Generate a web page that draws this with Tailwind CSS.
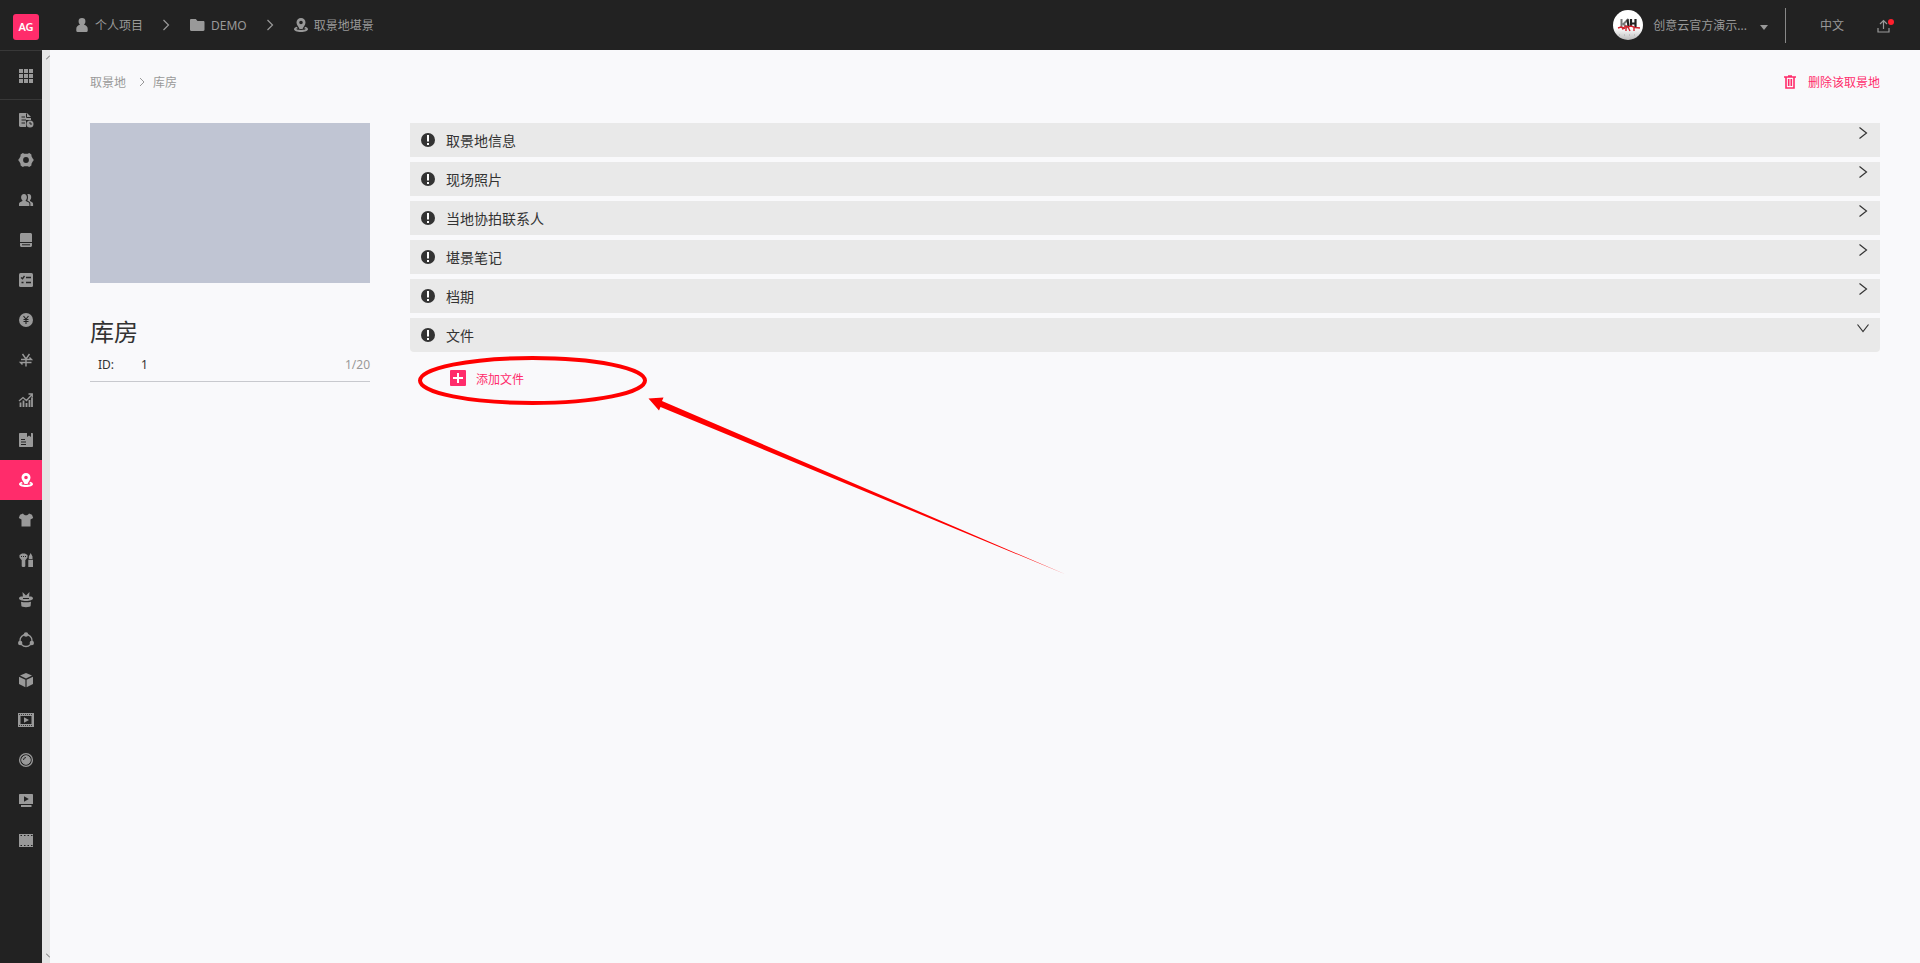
<!DOCTYPE html>
<html lang="zh-CN">
<head>
    <meta charset="UTF-8">
    <meta name="viewport" content="width=device-width, initial-scale=1.0">
    <title>取景地堪景</title>
    <script src="https://cdn.jsdelivr.net/npm/@tailwindcss/browser@4"></script>
</head>

<body class="min-h-screen flex flex-col bg-[#f9f9fb] text-[#333] text-xs font-['Noto_Sans','Noto_Sans_CJK_SC',sans-serif]">

    <!-- Header -->
    <header class="h-[50px] flex items-center bg-[#222] text-[#999]">
        <a href="#home" class="ml-[13px] mt-1 w-[26px] h-[26px] flex items-center justify-center rounded-[3px] bg-[#ff2c6b] text-white text-[11px] font-semibold">AG</a>

        <nav class="ml-[37px] flex items-center">
            <a href="#projects" class="flex items-center gap-[6px]">
                <svg class="w-[13px] h-[14px]" viewBox="0 0 13 14" fill="currentColor"><path d="M6 0a3.400 3.400 0 0 1 3.400 3.600c0 1.400-.6 2.500-1.400 3.200 2.200.5 3.700 2 3.700 3.900v2.100c0 .7-.4 1.200-1.100 1.200H1.400c-.7 0-1.100-.5-1.100-1.200v-2.100c0-1.900 1.500-3.400 3.700-3.900-.8-.7-1.400-1.800-1.400-3.200A3.400 3.400 0 0 1 6 0z"/></svg>
                <span class="pt-[2px]">个人项目</span>
            </a>
            <svg class="ml-[19px] mr-5 w-2 h-3" viewBox="0 0 8 12" fill="none" stroke="currentColor" stroke-width="1.200"><path d="M1.500 1l5 5-5 5"/></svg>
            <a href="#demo" class="flex items-center gap-[6px]">
                <svg class="w-[15px] h-[14px]" viewBox="0 0 15 14" fill="currentColor"><path d="M1.200 1h4.600l1.700 2h5.800c.7 0 1.200.5 1.200 1.200v7.600c0 .7-.5 1.200-1.200 1.200H1.200C.5 13 0 12.500 0 11.800V2.200C0 1.500.5 1 1.200 1z"/></svg>
                <span class="pt-[2px]">DEMO</span>
            </a>
            <svg class="ml-[19px] mr-5 w-2 h-3" viewBox="0 0 8 12" fill="none" stroke="currentColor" stroke-width="1.200"><path d="M1.500 1l5 5-5 5"/></svg>
            <a href="#scout" class="flex items-center gap-[6px]">
                <svg class="w-[14px] h-[14px]" viewBox="0 0 14 14" fill="currentColor"><path fill-rule="evenodd" d="M7 0a4.500 4.500 0 0 1 4.500 4.500C11.500 7 9.500 8.500 8.500 11h-3C4.500 8.500 2.500 7 2.500 4.500A4.500 4.500 0 0 1 7 0zm0 2.700a1.800 1.800 0 1 0 0 3.600 1.800 1.800 0 0 0 0-3.600z"/><path d="M2.800 8.800C1 9.400 0 10.300 0 11.300 0 12.900 3 14 7 14s7-1.100 7-2.700c0-1-1-1.900-2.800-2.500l-1 1.500c.9.200 1.500.5 1.500.8 0 .5-2.100.9-4.700.9s-4.700-.4-4.700-.9c0-.3.600-.6 1.500-.8z"/></svg>
                <span class="pt-[2px]">取景地堪景</span>
            </a>
        </nav>

        <div class="ml-auto flex items-center">
            <button type="button" class="flex items-center">
                <svg class="w-[30px] h-[30px]" viewBox="0 0 30 30">
                    <defs>
                        <linearGradient id="avatarBg" x1="0" y1="0" x2="0" y2="1"><stop offset=".6" stop-color="#fff"/><stop offset="1" stop-color="#bbb"/></linearGradient>
                    </defs>
                    <circle cx="15" cy="15" r="15" fill="url(#avatarBg)"/>
                    <path d="M8.500 9v9M15.500 9l-5 5 4 4" fill="none" stroke="#777" stroke-width="2"/>
                    <path d="M14.500 9.500l1 7M18 9v8M22.500 9v9M18 13.500h4" fill="none" stroke="#222" stroke-width="2.200"/>
                    <path d="M5 18l3-1 2 1 3-2 2 1 3-1 4 1.500 5 .5M9 19l3-1M13 17v4M15 17l2 4M21 17v4" fill="none" stroke="#d2232e" stroke-width="1.400"/>
                    <path d="M6 25h1M11 25h1M16 25h1M21 25h1" stroke="#aaa" stroke-width="1"/>
                </svg>
                <span class="ml-[10px] pt-[2px]">创意云官方演示...</span>
                <svg class="ml-[13px] mt-1 w-2 h-[5px]" viewBox="0 0 8 5" fill="currentColor"><path d="M0 0h8L4 5z"/></svg>
            </button>
            <span class="ml-[17px] w-px h-[35px] bg-[#888]"></span>
            <button type="button" class="ml-[34px] pt-[2px]">中文</button>
            <button type="button" aria-label="上传" class="ml-[33px] mr-[26px] pt-[2px]">
                <svg class="w-[17px] h-[14px]" viewBox="0 0 17 14" fill="none" stroke="currentColor" stroke-width="1.200"><path d="M1 9v4h11V9M6.500 10V1.500M3 5l3.500-3.500L10 5"/><circle cx="14" cy="3" r="3" fill="#ff1f2d" stroke="none"/></svg>
            </button>
        </div>
    </header>

    <div class="flex-1 flex">

        <!-- Sidebar -->
        <aside class="w-[42px] shrink-0 bg-[#222] text-[#999]">
            <a href="#apps" aria-label="应用" class="h-[50px] pt-[2px] pl-[10px] flex items-center justify-center border-y border-[#383838]">
                <svg class="w-[14px] h-[14px]" viewBox="0 0 14 14" fill="currentColor"><path d="M0 0h4v4H0zM5 0h4v4H5zM10 0h4v4h-4zM0 5h4v4H0zM5 5h4v4H5zM10 5h4v4h-4zM0 10h4v4H0zM5 10h4v4H5zM10 10h4v4h-4z"/></svg>
            </a>
            <nav>
                <a href="#script" aria-label="剧本" class="h-10 pl-[10px] flex items-center justify-center">
                    <svg class="w-4 h-4" viewBox="0 0 16 16"><path d="M2 1h7l4 4v3H8v7H2.500C1.700 15 1 14.500 1 13.800V2c0-.6.4-1 1-1z" fill="currentColor"/><path d="M3.500 5H7M3.500 8H8M3.500 11H7M8.500 1.500v4H13" fill="none" stroke="#222"/><circle cx="12" cy="12" r="3.500" fill="currentColor"/><path d="M12 10v2h2" fill="none" stroke="#222"/></svg>
                </a>
                <a href="#settings" aria-label="设置" class="h-10 pl-[10px] flex items-center justify-center">
                    <svg class="w-4 h-4" viewBox="0 0 16 16" fill="currentColor"><path fill-rule="evenodd" d="M4.800 1l1.500.7h3.400L11.200 1l2.200 1.500.1 1.800 1.200 2.200.8.700v1.600l-.8.700-1.200 2.200-.1 1.800-2.200 1.500-1.500-.7H6.300L4.800 15l-2.200-1.500-.1-1.800-1.200-2.200-.8-.7V7.200l.8-.7 1.200-2.200.1-1.800zM8 5.100a2.900 2.900 0 1 0 0 5.800 2.900 2.900 0 0 0 0-5.800z"/></svg>
                </a>
                <a href="#people" aria-label="人员" class="h-10 pl-[10px] flex items-center justify-center">
                    <svg class="w-4 h-4" viewBox="0 0 16 16" fill="currentColor"><path d="M6 2c1.800 0 2.900 1.400 2.900 3.200 0 1.400-.5 2.500-1.200 3.100v.7l2.700 1.300c.7.4 1 .9 1 1.600V14H1v-2.100c0-.7.300-1.200 1-1.600L4.400 9v-.7C3.600 7.700 3.100 6.600 3.100 5.200 3.100 3.400 4.200 2 6 2z"/><path d="M9.300 2.300c.4-.2.800-.3 1.200-.3 1.700 0 2.700 1.300 2.700 3 0 1.500-.5 2.500-1.200 3.200V9l2.200 1.200c.6.4.9.9.9 1.500V14h-2.700v-2.300c0-1-.5-1.800-1.400-2.300L9.300 8.500c.5-.9.700-2 .7-3.300 0-1.100-.2-2.100-.7-2.900z"/></svg>
                </a>
                <a href="#book" aria-label="手册" class="h-10 pl-[10px] flex items-center justify-center">
                    <svg class="w-4 h-4" viewBox="0 0 16 16" fill="currentColor"><path d="M3.500 1h9c.8 0 1.500.7 1.500 1.500V10H2V2.500C2 1.700 2.700 1 3.500 1zM2 11h12v2.500c0 .8-.7 1.500-1.500 1.500h-9c-.8 0-1.500-.7-1.500-1.500z"/><path d="M4 12.800h8" stroke="#222"/></svg>
                </a>
                <a href="#tasks" aria-label="任务" class="h-10 pl-[10px] flex items-center justify-center">
                    <svg class="w-4 h-4" viewBox="0 0 16 16"><rect x="1" y="1" width="14" height="14" rx="1.500" fill="currentColor"/><path d="M3 5.500l1.500 1.200L6.500 4M8 5.500h5M8 10.500h5M3.500 10.500h2" fill="none" stroke="#222" stroke-width="1.300"/></svg>
                </a>
                <a href="#budget" aria-label="预算" class="h-10 pl-[10px] flex items-center justify-center">
                    <svg class="w-4 h-4" viewBox="0 0 16 16"><circle cx="8" cy="8" r="7" fill="currentColor"/><path d="M5.500 4L8 7.200 10.500 4M5.500 7.500h5M5.500 9.500h5M8 7v5" fill="none" stroke="#222" stroke-width="1.100"/></svg>
                </a>
                <a href="#cost" aria-label="费用" class="h-10 pl-[10px] flex items-center justify-center">
                    <svg class="w-4 h-4" viewBox="0 0 16 16" fill="none" stroke="currentColor" stroke-width="1.400"><path d="M4.500 2L8 7l3.500-5M3 7.500h10.500L11.500 5.500M13.500 10.500H2.500l2 2M8 7v7.500"/></svg>
                </a>
                <a href="#stats" aria-label="统计" class="h-10 pl-[10px] flex items-center justify-center">
                    <svg class="w-4 h-4" viewBox="0 0 16 16" fill="none" stroke="currentColor"><path d="M2.500 15v-4.500M5.500 15V8.500M8.500 15v-4M11.500 15V8M14 15V5.500" stroke-width="1.800"/><path d="M1 9l4-3.500 3.500 3L14 2.500M10.500 2h3.800v3.500" stroke-width="1.300"/></svg>
                </a>
                <a href="#report" aria-label="报告" class="h-10 pl-[10px] flex items-center justify-center">
                    <svg class="w-4 h-4" viewBox="0 0 16 16"><path d="M2 1h7v4l2-1.500L13 5V1h1c.6 0 1 .4 1 1v12c0 .6-.4 1-1 1H2c-.6 0-1-.4-1-1V2c0-.6.4-1 1-1z" fill="currentColor"/><path d="M3 7.500h4M3 10h5M3 12.500h5" stroke="#222" stroke-width="1.100"/></svg>
                </a>
                <a href="#scout" aria-label="取景地堪景" class="h-10 pl-[10px] flex items-center justify-center bg-[#ff2c6b] text-white">
                    <svg class="w-[14px] h-[14px]" viewBox="0 0 14 14" fill="currentColor"><path fill-rule="evenodd" d="M7 0a4.500 4.500 0 0 1 4.500 4.500C11.500 7 9.500 8.500 8.500 11h-3C4.500 8.500 2.500 7 2.500 4.500A4.500 4.500 0 0 1 7 0zm0 2.700a1.800 1.800 0 1 0 0 3.600 1.800 1.800 0 0 0 0-3.600z"/><path d="M2.800 8.800C1 9.400 0 10.300 0 11.300 0 12.900 3 14 7 14s7-1.100 7-2.700c0-1-1-1.900-2.800-2.500l-1 1.500c.9.200 1.500.5 1.500.8 0 .5-2.100.9-4.700.9s-4.700-.4-4.700-.9c0-.3.600-.6 1.500-.8z"/></svg>
                </a>
                <a href="#costume" aria-label="服装" class="h-10 pl-[10px] flex items-center justify-center">
                    <svg class="w-4 h-4" viewBox="0 0 16 16" fill="currentColor"><path d="M5 1.500c.6 1.200 1.700 1.800 3 1.800s2.400-.6 3-1.800l3 1.200 1.200 3.300-2.700 1.500V14.500h-9V7.500L.8 6 2 2.700z"/></svg>
                </a>
                <a href="#makeup" aria-label="化妆" class="h-10 pl-[10px] flex items-center justify-center">
                    <svg class="w-4 h-4" viewBox="0 0 16 16" fill="currentColor"><path d="M1.500 3L4 1.500h3L9.500 3v2.500L7.500 8h-4l-2-2.500zM3.700 8h3.600v6c0 .6-.8 1-1.800 1s-1.800-.4-1.800-1zM10.800 7V4.500L12.700 1l1.800 3.500V7zM10.300 7.700H15V15h-4.700z"/><path d="M3 4.500h1M5 4.500h1M7 4.500h1" stroke="#222"/></svg>
                </a>
                <a href="#props" aria-label="道具" class="h-10 pl-[10px] flex items-center justify-center">
                    <svg class="w-4 h-4" viewBox="0 0 16 16" fill="currentColor"><path d="M4.500 0L8 3.500 11.500 0 11 6H5zM3 4.500h2V7h6V4.500h2c1.200.3 2 1 2 1.800C15 8 12 9 8 9S1 8 1 6.300c0-.8.8-1.500 2-1.800zM3 9.700c3.200.7 6.800.7 10 0L12.600 14c0 .7-2.100 1.200-4.600 1.200S3.400 14.700 3.400 14z"/></svg>
                </a>
                <a href="#flow" aria-label="流程" class="h-10 pl-[10px] flex items-center justify-center">
                    <svg class="w-4 h-4" viewBox="0 0 16 16" fill="currentColor"><circle cx="8" cy="8.500" r="6" fill="none" stroke="currentColor" stroke-width="1.300"/><circle cx="8" cy="2.500" r="2.200"/><circle cx="2.200" cy="11" r="2.200"/><circle cx="13.800" cy="11" r="2.200"/></svg>
                </a>
                <a href="#assets" aria-label="资产" class="h-10 pl-[10px] flex items-center justify-center">
                    <svg class="w-4 h-4" viewBox="0 0 16 16" fill="currentColor"><path d="M8 1l6 2.600L8 6.500 2 3.600zM1 4.700l6.400 3v7.500L1 12zM15 4.700l-6.400 3v7.500L15 12z"/></svg>
                </a>
                <a href="#video" aria-label="视频" class="h-10 pl-[10px] flex items-center justify-center">
                    <svg class="w-4 h-4" viewBox="0 0 16 16"><path d="M0 1h16v14H0z" fill="currentColor"/><path d="M2.500 4h11v8h-11z" fill="#222"/><path d="M1 2.500h14M1 13.500h14" stroke="#222" stroke-width=".8" stroke-dasharray="1 1"/><path d="M6 5.200v5.600L11 8z" fill="currentColor"/></svg>
                </a>
                <a href="#lens" aria-label="镜头" class="h-10 pl-[10px] flex items-center justify-center">
                    <svg class="w-4 h-4" viewBox="0 0 16 16" fill="none" stroke="currentColor"><circle cx="8" cy="8" r="6.400" stroke-width="1.300"/><circle cx="8" cy="8" r="4.300" fill="currentColor"/><path d="M5.500 8A2.500 2.500 0 0 1 8 5.500" stroke="#222"/></svg>
                </a>
                <a href="#play" aria-label="播放" class="h-10 pl-[10px] flex items-center justify-center">
                    <svg class="w-4 h-4" viewBox="0 0 16 16"><path d="M2 2h12c.6 0 1 .4 1 1v9H1V3c0-.6.4-1 1-1zM3 13h10.500v2H3z" fill="currentColor"/><path d="M6 4.300v5.400L10.800 7z" fill="#222"/></svg>
                </a>
                <a href="#film" aria-label="胶片" class="h-10 pl-[10px] flex items-center justify-center">
                    <svg class="w-4 h-4" viewBox="0 0 16 16"><path d="M1 2h14v13H1z" fill="currentColor"/><path d="M2.500 3.500h12M2.500 13.500h12" stroke="#222" stroke-width="1" stroke-dasharray="1.500 2"/></svg>
                </a>
            </nav>
        </aside>

        <!-- Scroll track -->
        <div class="w-2 shrink-0 flex flex-col justify-between items-end py-[5px] bg-[#e5e5e5]">
            <svg class="w-1 h-[5px]" viewBox="0 0 4 5" stroke="#666"><path d="M0 4.500L4 .5"/></svg>
            <svg class="w-1 h-[5px]" viewBox="0 0 4 5" stroke="#666"><path d="M0 .5l4 4"/></svg>
        </div>

        <!-- Main -->
        <main class="flex-1 min-w-0 px-10">
            <div class="mt-[22px] h-5 flex items-center justify-between">
                <nav class="flex items-center text-[#999]">
                    <a href="#locations" class="pt-[2px]">取景地</a>
                    <svg class="ml-[13px] mr-[8px] w-[6px] h-[10px]" viewBox="0 0 6 10" fill="none" stroke="currentColor"><path d="M1 1l4 4-4 4"/></svg>
                    <a href="#storage" class="pt-[2px]">库房</a>
                </nav>
                <button type="button" class="flex items-center gap-3 text-[#ff2c6b]">
                    <svg class="w-3 h-[14px]" viewBox="0 0 12 14" fill="none" stroke="currentColor" stroke-width="1.600"><path d="M0 2h12M4 1h4M2 2v11h8V2M4.700 4v7M7.300 4v7"/></svg>
                    <span class="pt-[2px]">删除该取景地</span>
                </button>
            </div>

            <div class="mt-[31px] flex gap-10">
                <!-- Location card -->
                <section class="w-[280px] shrink-0">
                    <div class="h-40 bg-[#c0c5d3]"></div>
                    <input type="text" value="库房" maxlength="20" aria-label="取景地名称" class="mt-[27px] block w-full h-10 bg-transparent text-2xl outline-none">
                    <div class="mt-[5px] h-[27px] pb-[6px] flex items-center border-b border-[#c8c9ce]">
                        <span class="ml-2 w-[43px]">ID:</span>
                        <span>1</span>
                        <span class="ml-auto text-[#999]">1/20</span>
                    </div>
                </section>

                <!-- Accordion -->
                <section class="flex-1 min-w-0 flex flex-col gap-[5px] text-sm">
                    <button type="button" class="h-[34px] px-[11px] flex items-center bg-[#e9e9e9]">
                        <svg class="w-[14px] h-[14px]" viewBox="0 0 14 14"><circle cx="7" cy="7" r="7" fill="#333"/><path d="M7 2v6.500M7 10v2" stroke="#fff" stroke-width="2"/></svg>
                        <span class="ml-[11px] pt-[2px]">取景地信息</span>
                        <svg class="ml-auto self-start mt-1 w-3 h-3" viewBox="0 0 12 12" fill="none" stroke="#333" stroke-width="1.200"><path d="M2.500 .5l7 5.500-7 5.500"/></svg>
                    </button>
                    <button type="button" class="h-[34px] px-[11px] flex items-center bg-[#e9e9e9]">
                        <svg class="w-[14px] h-[14px]" viewBox="0 0 14 14"><circle cx="7" cy="7" r="7" fill="#333"/><path d="M7 2v6.500M7 10v2" stroke="#fff" stroke-width="2"/></svg>
                        <span class="ml-[11px] pt-[2px]">现场照片</span>
                        <svg class="ml-auto self-start mt-1 w-3 h-3" viewBox="0 0 12 12" fill="none" stroke="#333" stroke-width="1.200"><path d="M2.500 .5l7 5.500-7 5.500"/></svg>
                    </button>
                    <button type="button" class="h-[34px] px-[11px] flex items-center bg-[#e9e9e9]">
                        <svg class="w-[14px] h-[14px]" viewBox="0 0 14 14"><circle cx="7" cy="7" r="7" fill="#333"/><path d="M7 2v6.500M7 10v2" stroke="#fff" stroke-width="2"/></svg>
                        <span class="ml-[11px] pt-[2px]">当地协拍联系人</span>
                        <svg class="ml-auto self-start mt-1 w-3 h-3" viewBox="0 0 12 12" fill="none" stroke="#333" stroke-width="1.200"><path d="M2.500 .5l7 5.500-7 5.500"/></svg>
                    </button>
                    <button type="button" class="h-[34px] px-[11px] flex items-center bg-[#e9e9e9]">
                        <svg class="w-[14px] h-[14px]" viewBox="0 0 14 14"><circle cx="7" cy="7" r="7" fill="#333"/><path d="M7 2v6.500M7 10v2" stroke="#fff" stroke-width="2"/></svg>
                        <span class="ml-[11px] pt-[2px]">堪景笔记</span>
                        <svg class="ml-auto self-start mt-1 w-3 h-3" viewBox="0 0 12 12" fill="none" stroke="#333" stroke-width="1.200"><path d="M2.500 .5l7 5.500-7 5.500"/></svg>
                    </button>
                    <button type="button" class="h-[34px] px-[11px] flex items-center bg-[#e9e9e9]">
                        <svg class="w-[14px] h-[14px]" viewBox="0 0 14 14"><circle cx="7" cy="7" r="7" fill="#333"/><path d="M7 2v6.500M7 10v2" stroke="#fff" stroke-width="2"/></svg>
                        <span class="ml-[11px] pt-[2px]">档期</span>
                        <svg class="ml-auto self-start mt-1 w-3 h-3" viewBox="0 0 12 12" fill="none" stroke="#333" stroke-width="1.200"><path d="M2.500 .5l7 5.500-7 5.500"/></svg>
                    </button>
                    <div>
                        <button type="button" aria-expanded="true" class="w-full h-[34px] px-[11px] flex items-center rounded-b bg-[#e9e9e9]">
                            <svg class="w-[14px] h-[14px]" viewBox="0 0 14 14"><circle cx="7" cy="7" r="7" fill="#333"/><path d="M7 2v6.500M7 10v2" stroke="#fff" stroke-width="2"/></svg>
                            <span class="ml-[11px] pt-[2px]">文件</span>
                            <svg class="ml-auto self-start mt-1 w-3 h-3" viewBox="0 0 12 12" fill="none" stroke="#333" stroke-width="1.200"><path d="M.5 2.500l5.500 7 5.500-7"/></svg>
                        </button>
                        <div class="relative pt-[18px] pl-10">
                            <button type="button" class="flex items-start gap-[10px] text-xs text-[#ff2c6b]">
                                <svg class="w-4 h-4" viewBox="0 0 16 16"><rect width="16" height="16" rx="1" fill="currentColor"/><path d="M8 3v10M3 8h10" stroke="#fff" stroke-width="2"/></svg>
                                <span class="leading-5">添加文件</span>
                            </button>
                            <!-- Pointer to the add button -->
                            <svg class="absolute left-0 top-0 w-[660px] h-[230px] pointer-events-none" viewBox="0 0 660 230" fill="red">
                                <ellipse cx="122.500" cy="28.500" rx="112.500" ry="22.500" fill="none" stroke="red" stroke-width="4"/>
                                <path d="M238.500 46.500l15-1-1.500 3.500L656 222.500 250.500 55l-1.500 3.500z"/>
                            </svg>
                        </div>
                    </div>
                </section>
            </div>
        </main>
    </div>

</body>
</html>
